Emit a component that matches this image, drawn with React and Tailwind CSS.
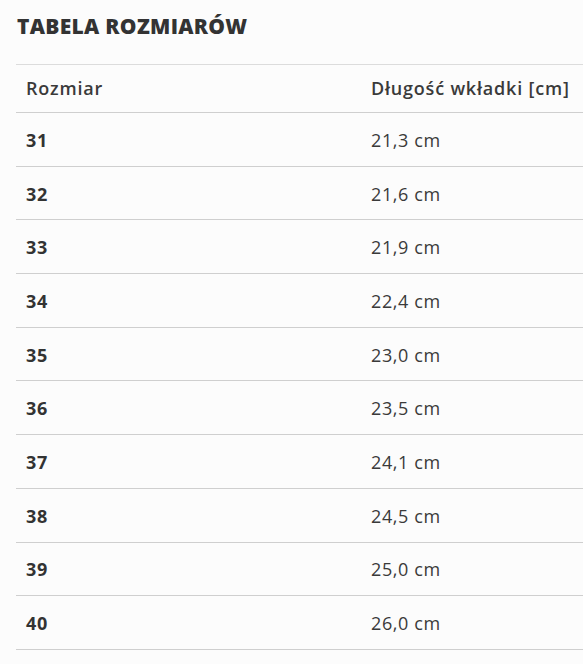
const rows = [
  ["31", "21,3 cm"],
  ["32", "21,6 cm"],
  ["33", "21,9 cm"],
  ["34", "22,4 cm"],
  ["35", "23,0 cm"],
  ["36", "23,5 cm"],
  ["37", "24,1 cm"],
  ["38", "24,5 cm"],
  ["39", "25,0 cm"],
  ["40", "26,0 cm"],
];

const App = () => {
  return (
    <div className="min-h-screen bg-[#fcfcfc] pl-4 text-[#333] font-['Open_Sans',sans-serif]">
      <h2 className="h-[64px] pl-[1px] pt-[11px] text-[21px] font-extrabold tracking-[0.3px] text-[#333]">
        TABELA ROZMIARÓW
      </h2>
      <table className="w-full border-collapse border-t border-[#dcdcdc]">
        <thead>
          <tr className="h-[48px] border-b border-[#cfcfcf]">
            <th className="w-[345px] pl-[10px] text-left text-[18px] font-semibold tracking-[0.8px] text-[#3a3a3a]">Rozmiar</th>
            <th className="pl-[10px] text-left text-[18px] font-semibold tracking-[0.8px] text-[#3a3a3a]">Długość wkładki [cm]</th>
          </tr>
        </thead>
        <tbody>
          {rows.map(([size, len]) => (
            <tr key={size} className="h-[53.7px] border-b border-[#cfcfcf]">
              <td className="pl-[10px] pt-[2px] text-[18px] font-bold tracking-[0.6px] text-[#333]">{size}</td>
              <td className="pl-[10px] pt-[2px] text-[18px] tracking-[0.6px] text-[#3a3a3a]">{len}</td>
            </tr>
          ))}
        </tbody>
      </table>
    </div>
  );
};

export default App;
